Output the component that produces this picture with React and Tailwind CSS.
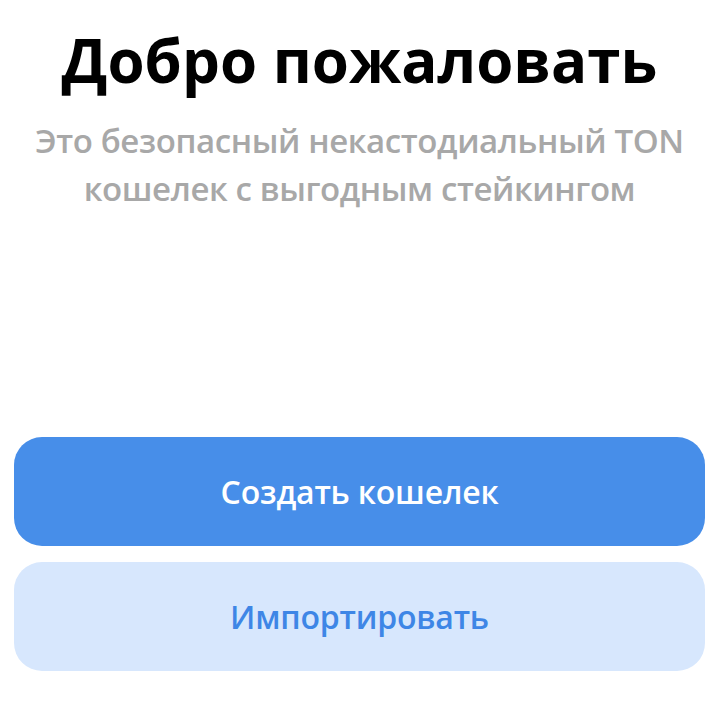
import React from 'react';

export default function App() {
  return (
    <div
      className="h-[703px] w-full bg-white flex flex-col justify-between px-[14px] pt-[20px] pb-[32px]"
      style={{ fontFamily: '"Open Sans", "Noto Sans", sans-serif' }}
    >
      {/* Header */}
      <div className="flex flex-col items-center text-center">
        <h1 className="text-[60px] leading-[80px] font-bold text-black">Добро пожаловать</h1>
        <p className="mt-[17px] text-[33px] leading-[48px] font-semibold text-[#a8a8a8] tracking-[-0.4px]">
          Это безопасный некастодиальный TON
          <br />
          кошелек с выгодным стейкингом
        </p>
      </div>

      {/* Actions */}
      <div className="flex flex-col gap-[16px]">
        <button className="h-[109px] w-full rounded-[28px] bg-[#478ee9] text-white text-[32px] font-semibold tracking-[-0.2px]">
          Создать кошелек
        </button>
        <button className="h-[109px] w-full rounded-[28px] bg-[#d7e7fd] text-[#3e86e6] text-[32px] font-semibold tracking-[-0.2px]">
          Импортировать
        </button>
      </div>
    </div>
  );
}
